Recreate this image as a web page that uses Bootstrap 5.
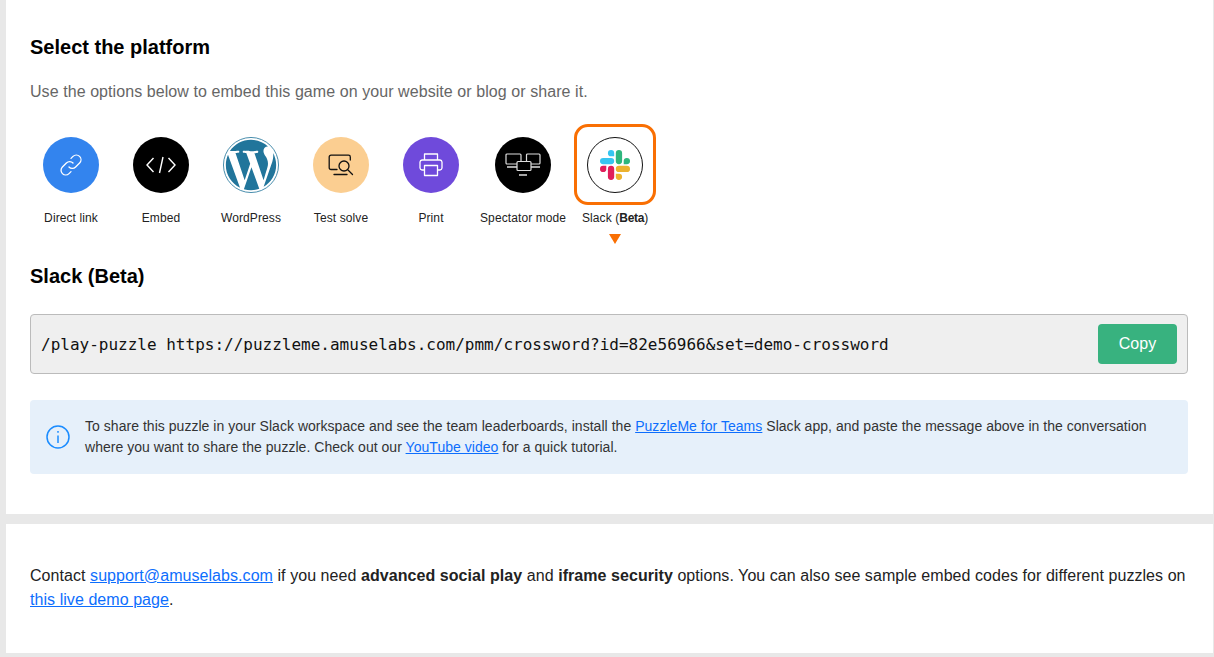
<!DOCTYPE html>
<html lang="en"><head><meta charset="utf-8"><title>Share</title>
<link href="https://cdn.jsdelivr.net/npm/bootstrap@5.3.0/dist/css/bootstrap.min.css" rel="stylesheet">
<style>
html,body{height:100%}
body{background:#e8e8e8;font-family:"Liberation Sans",Arial,sans-serif;color:#222;font-size:16px;padding:0 1px 0 6px;overflow:hidden;letter-spacing:.07px}
.panel-a{background:#fff;height:514px;padding:37px 25px 0 24px}
.panel-b{background:#fff;height:129px;margin-top:10px;padding:40px 24px 0;line-height:24px;letter-spacing:.06px}
.panel-title{font-size:20px;font-weight:700;line-height:21px;color:#000;margin:0;letter-spacing:0}
.panel-sub{color:#666;line-height:24px;margin:22px 0 0}
.plat-row{margin-top:20px;gap:8px}
.plat-item{min-width:82px;font-size:12px;line-height:14px;color:#222;white-space:nowrap;letter-spacing:.1px}
.plat-box{width:82px;height:81px;border:3px solid transparent;border-radius:14px}
.plat-item.on .plat-box{border-color:#f96f03}
.plat-label{margin-top:6px}
.beta-word{font-weight:700;letter-spacing:-.3px}
.plat-circle{width:56px;height:56px;border-radius:50%}
.c-blue{background:#3384ee}.c-black{background:#000}.c-peach{background:#fbce91}.c-purple{background:#6f4adb}
.c-ring{background:#fff;border:1px solid #111}
.caret-down{width:0;height:0;border:6px solid transparent;border-top:10px solid #f96f03;border-bottom:0;margin:9px 0 0 579px}
.sec-title{margin-top:22px}
.code-box{background:#efefef;border:1px solid #bbb;border-radius:4px;height:60px;margin-top:27px;padding:0 10px}
.code-txt{font-family:"DejaVu Sans Mono",monospace;font-size:16px;color:#111;white-space:nowrap;letter-spacing:0;padding-top:2px}
.copy-btn{background:#38b27f;color:#fff;border:0;border-radius:4px;width:79px;height:40px;font-size:16px;padding:0;letter-spacing:0}
.copy-btn:hover{background:#38b27f;color:#fff}
.info-box{background:#e6f0fa;border-radius:4px;height:74px;margin-top:26px;padding:0 16px;font-size:14px;line-height:21px;color:#333;gap:15px;letter-spacing:.035px}
a{color:#0d6efd}
</style></head><body>
<div class="panel-a">
<h2 class="panel-title">Select the platform</h2>
<p class="panel-sub">Use the options below to embed this game on your website or blog or share it.</p>
<div class="plat-row d-flex">
<div class="plat-item text-center"><div class="plat-box d-flex align-items-center justify-content-center"><div class="plat-circle c-blue d-flex align-items-center justify-content-center">
<svg width="24" height="24" viewBox="0 0 24 24" fill="none" stroke="#fff" stroke-width="1.3" stroke-linecap="round"><path d="M10 14a4.6 4.6 0 0 0 6.6 0l4-4a4.6 4.6 0 0 0-6.6-6.6l-2 2"/><path d="M14 10a4.6 4.6 0 0 0-6.6 0l-4 4a4.6 4.6 0 0 0 6.6 6.6l2-2"/></svg></div></div>
<div class="plat-label">Direct link</div></div>
<div class="plat-item text-center"><div class="plat-box d-flex align-items-center justify-content-center"><div class="plat-circle c-black d-flex align-items-center justify-content-center">
<svg width="30" height="18" viewBox="0 0 30 18" fill="none" stroke="#fff" stroke-width="1.4"><path d="M7.5 2 1 9l6.500 7M22.500 2 29 9l-6.500 7M17 1l-3.500 16"/></svg></div></div>
<div class="plat-label">Embed</div></div>
<div class="plat-item text-center"><div class="plat-box d-flex align-items-center justify-content-center">
<svg width="56" height="56" viewBox="0 0 24 24" fill="#21759b"><circle cx="12" cy="12" r="11.8" fill="none" stroke="#21759b" stroke-width=".35"/><path d="M21.469 6.825c.84 1.537 1.318 3.3 1.318 5.175 0 3.979-2.156 7.456-5.363 9.325l3.295-9.527c.615-1.54.82-2.771.82-3.864 0-.405-.026-.78-.07-1.11m-7.981.105c.647-.03 1.232-.105 1.232-.105.582-.075.514-.93-.067-.899 0 0-1.755.135-2.88.135-1.064 0-2.85-.15-2.85-.15-.585-.03-.661.855-.075.885 0 0 .54.061 1.125.09l1.68 4.605-2.37 7.08L5.354 6.9c.649-.03 1.234-.1 1.234-.1.585-.075.516-.93-.065-.896 0 0-1.746.138-2.874.138-.2 0-.438-.008-.69-.015C4.911 3.15 8.235 1.215 12 1.215c2.809 0 5.365 1.072 7.286 2.833-.046-.003-.091-.009-.141-.009-1.06 0-1.812.923-1.812 1.914 0 .89.513 1.643 1.06 2.531.411.72.89 1.643.89 2.977 0 .915-.354 1.994-.821 3.479l-1.075 3.585-3.9-11.61.001.014zM12 22.784c-1.059 0-2.081-.153-3.048-.437l3.237-9.406 3.315 9.087c.024.053.05.101.078.149-1.12.393-2.325.609-3.582.609M1.211 12c0-1.564.336-3.05.935-4.39L7.29 21.709C3.694 19.96 1.212 16.271 1.211 12"/></svg></div>
<div class="plat-label">WordPress</div></div>
<div class="plat-item text-center"><div class="plat-box d-flex align-items-center justify-content-center"><div class="plat-circle c-peach d-flex align-items-center justify-content-center">
<svg width="26" height="22" viewBox="0 0 26 22" fill="none" stroke="#111" stroke-width="1.300" stroke-linecap="round"><path d="M9 15.500H3a1.800 1.800 0 0 1-1.800-1.800V3A1.800 1.800 0 0 1 3 1.200h17.500A1.800 1.800 0 0 1 22.300 3v3"/><circle cx="16" cy="12" r="5"/><path d="m20 16 4.500 4.500M6 20.500h13"/></svg></div></div>
<div class="plat-label">Test solve</div></div>
<div class="plat-item text-center"><div class="plat-box d-flex align-items-center justify-content-center"><div class="plat-circle c-purple d-flex align-items-center justify-content-center">
<svg width="24" height="24" viewBox="0 0 24 24" fill="none" stroke="#fff" stroke-width="1.300" stroke-linejoin="round"><path d="M5.500 7V1h13v6"/><path d="M5.500 17H3a2.200 2.200 0 0 1-2-2V9a2.200 2.200 0 0 1 2-2h18a2.200 2.200 0 0 1 2 2v6a2.200 2.200 0 0 1-2 2h-2.500"/><rect x="5.500" y="12.500" width="13" height="10"/></svg></div></div>
<div class="plat-label">Print</div></div>
<div class="plat-item text-center"><div class="plat-box mx-auto d-flex align-items-center justify-content-center"><div class="plat-circle c-black d-flex align-items-center justify-content-center">
<svg width="36" height="24" viewBox="0 0 36 24" fill="none" stroke="#ddd" stroke-width="1.200"><rect x="1" y="1" width="15" height="10" rx="1"/><rect x="21.500" y="1" width="13.500" height="10" rx="1"/><rect x="12" y="8.500" width="14" height="9" rx="1" fill="#000"/><path d="M2 14h10M26 14h9M14 22h8" stroke-width="1.300"/></svg></div></div>
<div class="plat-label">Spectator mode</div></div>
<div class="plat-item on text-center"><div class="plat-box d-flex align-items-center justify-content-center"><div class="plat-circle c-ring d-flex align-items-center justify-content-center">
<svg width="30" height="30" viewBox="0 0 24 24"><path fill="#e01e5a" d="M5.042 15.165a2.528 2.528 0 0 1-2.52 2.523A2.528 2.528 0 0 1 0 15.165a2.527 2.527 0 0 1 2.522-2.52h2.52v2.52zM6.313 15.165a2.527 2.527 0 0 1 2.521-2.52 2.527 2.527 0 0 1 2.521 2.52v6.313A2.528 2.528 0 0 1 8.834 24a2.528 2.528 0 0 1-2.521-2.522v-6.313z"/><path fill="#36c5f0" d="M8.834 5.042a2.528 2.528 0 0 1-2.521-2.52A2.528 2.528 0 0 1 8.834 0a2.528 2.528 0 0 1 2.521 2.522v2.52H8.834zM8.834 6.313a2.528 2.528 0 0 1 2.521 2.521 2.528 2.528 0 0 1-2.521 2.521H2.522A2.528 2.528 0 0 1 0 8.834a2.528 2.528 0 0 1 2.522-2.521h6.312z"/><path fill="#2eb67d" d="M18.956 8.834a2.528 2.528 0 0 1 2.522-2.521A2.528 2.528 0 0 1 24 8.834a2.528 2.528 0 0 1-2.522 2.521h-2.522V8.834zM17.688 8.834a2.528 2.528 0 0 1-2.523 2.521 2.527 2.527 0 0 1-2.52-2.521V2.522A2.527 2.527 0 0 1 15.165 0a2.528 2.528 0 0 1 2.523 2.522v6.312z"/><path fill="#ecb22e" d="M15.165 18.956a2.528 2.528 0 0 1 2.523 2.522A2.528 2.528 0 0 1 15.165 24a2.527 2.527 0 0 1-2.52-2.522v-2.522h2.52zM15.165 17.688a2.527 2.527 0 0 1-2.52-2.523 2.526 2.526 0 0 1 2.52-2.52h6.313A2.527 2.527 0 0 1 24 15.165a2.528 2.528 0 0 1-2.522 2.523h-6.313z"/></svg></div></div>
<div class="plat-label">Slack (<span class="beta-word">Beta</span>)</div></div>
</div>
<div class="caret-down"></div>
<h2 class="panel-title sec-title">Slack (Beta)</h2>
<div class="code-box d-flex align-items-center justify-content-between"><span class="code-txt">/play-puzzle https://puzzleme.amuselabs.com/pmm/crossword?id=82e56966&amp;set=demo-crossword</span><button class="btn copy-btn" type="button">Copy</button></div>
<div class="info-box d-flex align-items-center">
<svg class="flex-shrink-0" width="24" height="24" viewBox="0 0 24 24" fill="none" stroke="#1a8cff" stroke-width="1.500"><circle cx="12" cy="12" r="11"/><path d="M12 10.500V18"/><path d="M12 6v1.800"/></svg>
<div>To share this puzzle in your Slack workspace and see the team leaderboards, install the <a href="#">PuzzleMe for Teams</a> Slack app, and paste the message above in the conversation where you want to share the puzzle. Check out our <a href="#">YouTube video</a> for a quick tutorial.</div>
</div>
</div>
<div class="panel-b">Contact <a href="#">support@amuselabs.com</a> if you need <b>advanced social play</b> and <b>iframe security</b> options. You can also see sample embed codes for different puzzles on <a href="#">this live demo page</a>.</div>
<script src="https://cdn.jsdelivr.net/npm/bootstrap@5.3.0/dist/js/bootstrap.bundle.min.js"></script>
</body></html>
